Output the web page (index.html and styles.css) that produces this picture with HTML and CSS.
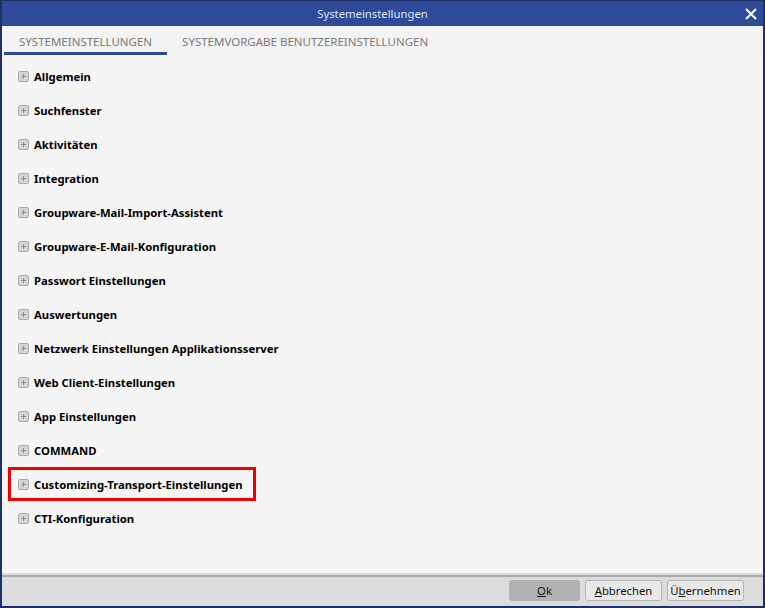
FILE: index.html
```html
<!DOCTYPE html>
<html>
<head>
  <meta name="viewport" content="width=device-width, initial-scale=1.0">
  <link rel="stylesheet" href="styles.css">
</head>
<body>
  <div class="window">
    <div class="titlebar">
      <span class="title">Systemeinstellungen</span>
      <svg class="close" width="12" height="12" viewBox="0 0 12 12">
        <path d="M1 1 L11 11 M11 1 L1 11" stroke="#fff" stroke-width="2"/>
      </svg>
    </div>

    <div class="tabs">
      <div class="tab active">SYSTEMEINSTELLUNGEN</div>
      <div class="tab">SYSTEMVORGABE BENUTZEREINSTELLUNGEN</div>
    </div>

    <div class="content">
      <ul class="tree">
        <li class="node"><span class="plus"></span>Allgemein</li>
        <li class="node"><span class="plus"></span>Suchfenster</li>
        <li class="node"><span class="plus"></span>Aktivitäten</li>
        <li class="node"><span class="plus"></span>Integration</li>
        <li class="node"><span class="plus"></span>Groupware-Mail-Import-Assistent</li>
        <li class="node"><span class="plus"></span>Groupware-E-Mail-Konfiguration</li>
        <li class="node"><span class="plus"></span>Passwort Einstellungen</li>
        <li class="node"><span class="plus"></span>Auswertungen</li>
        <li class="node"><span class="plus"></span>Netzwerk Einstellungen Applikationsserver</li>
        <li class="node"><span class="plus"></span>Web Client-Einstellungen</li>
        <li class="node"><span class="plus"></span>App Einstellungen</li>
        <li class="node"><span class="plus"></span>COMMAND</li>
        <li class="node marked"><span class="plus"></span>Customizing-Transport-Einstellungen</li>
        <li class="node"><span class="plus"></span>CTI-Konfiguration</li>
      </ul>
    </div>

    <div class="footer">
      <button class="btn primary"><u>O</u>k</button>
      <button class="btn"><u>A</u>bbrechen</button>
      <button class="btn">Ü<u>b</u>ernehmen</button>
    </div>
  </div>
</body>
</html>
```

FILE: styles.css
```css
* {
  box-sizing: border-box;
  margin: 0;
  padding: 0;
}

body {
  width: 765px;
  height: 608px;
  background-color: #1f2f66;
  font-family: "Noto Sans", "Open Sans", sans-serif;
  font-size: 11.3px;
  overflow: hidden;
}

.window {
  display: flex;
  flex-direction: column;
  width: 765px;
  height: 608px;
  padding: 1px 2px 2px 2px;
}

.titlebar {
  position: relative;
  height: 25px;
  background-color: #2e4a99;
  display: flex;
  align-items: center;
  justify-content: center;
}

.title {
  color: #dfe4f2;
  font-size: 11.3px;
  margin-right: 20px;
}

.close {
  position: absolute;
  right: 6px;
  top: 7px;
}

.tabs {
  display: flex;
  background-color: #f3f3f3;
  padding: 8px 0 0 2px;
}

.tab {
  color: #7a7a7a;
  font-size: 11.5px;
  padding: 0 15px 3px 15px;
  border-bottom: 3px solid transparent;
}

.tab.active {
  border-bottom-color: #2e4a99;
}

.content {
  flex: 1;
  background-color: #f5f5f5;
  padding: 4px 0 0 6px;
}

.tree {
  list-style: none;
}

.node {
  display: flex;
  align-items: center;
  height: 34px;
  padding-left: 10px;
  font-weight: bold;
  color: #000;
  white-space: nowrap;
}

.node.marked {
  width: 248px;
  outline: 3px solid #f20000;
  outline-offset: -3px;
}

.plus {
  position: relative;
  flex-shrink: 0;
  width: 11px;
  height: 11px;
  margin-right: 5px;
  border: 1px solid #a8a8a8;
  border-radius: 2px;
  background-color: #d6d6d6;
}

.plus::before,
.plus::after {
  content: "";
  position: absolute;
  background-color: #8a8a8a;
}

.plus::before {
  left: 2px;
  top: 4px;
  width: 5px;
  height: 1px;
}

.plus::after {
  left: 4px;
  top: 2px;
  width: 1px;
  height: 5px;
}

.footer {
  height: 31px;
  background-color: #dcdcdc;
  border-top: 2px solid #a9a9a9;
  box-shadow: 0 -2px 0 #dedede;
  display: flex;
  justify-content: flex-end;
  align-items: center;
  gap: 5px;
  padding: 0 19px 2px 0;
}

.btn {
  height: 21px;
  padding: 0;
  font-family: "Noto Sans", "Open Sans", sans-serif;
  font-size: 11.3px;
  color: #111;
  background-color: #e9e9e9;
  border: 1px solid #b3b3b3;
  border-radius: 3px;
  width: 77px;
}

.btn.primary {
  width: 71px;
  background-color: #b1b1b1;
  border-color: #b1b1b1;
}
```
